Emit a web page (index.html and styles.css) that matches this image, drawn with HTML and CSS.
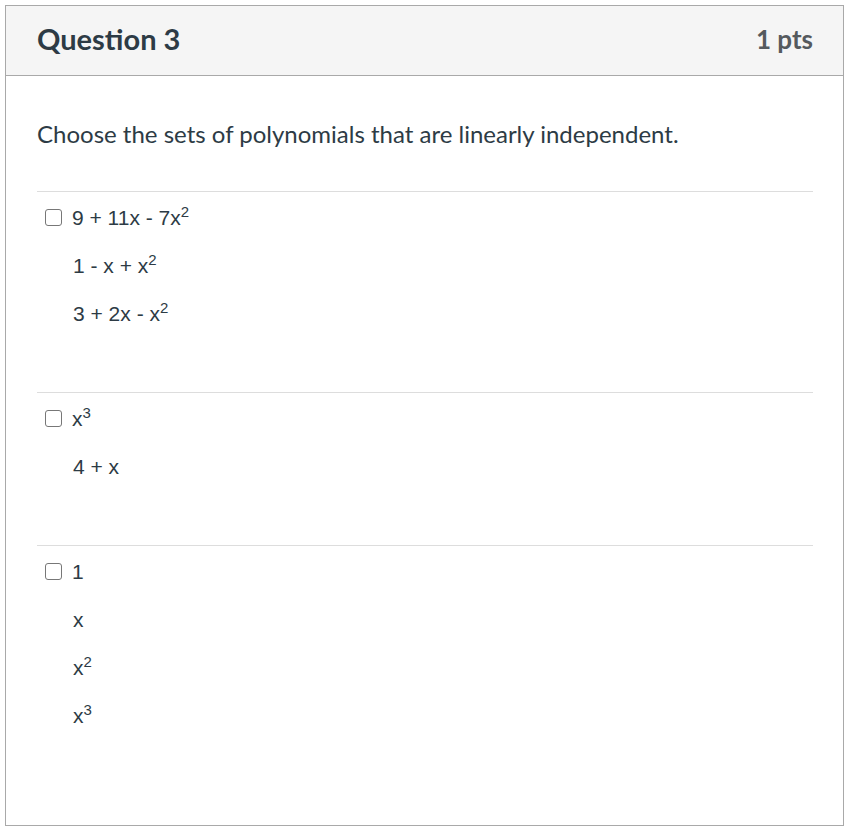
FILE: index.html
```html
<!DOCTYPE html>
<html>
<head>
<meta charset="utf-8">
<link rel="stylesheet" href="styles.css">
</head>
<body>
<div class="question">
  <div class="header">
    <h2 class="title">Question 3</h2>
    <div class="points">1 pts</div>
  </div>
  <div class="content">
    <p class="question-text">Choose the sets of polynomials that are linearly independent.</p>
    <div class="answer">
      <p class="line"><span class="box"></span>9 + 11x - 7x<sup>2</sup></p>
      <p class="line indent">1 - x + x<sup>2</sup></p>
      <p class="line indent">3 + 2x - x<sup>2</sup></p>
    </div>
    <div class="answer">
      <p class="line"><span class="box"></span>x<sup>3</sup></p>
      <p class="line indent">4 + x</p>
    </div>
    <div class="answer">
      <p class="line"><span class="box"></span>1</p>
      <p class="line indent">x</p>
      <p class="line indent">x<sup>2</sup></p>
      <p class="line indent">x<sup>3</sup></p>
    </div>
  </div>
</div>
</body>
</html>
```
FILE: styles.css
```css
html, body {
  margin: 0;
  padding: 0;
  background: #ffffff;
}
body {
  padding: 5px;
  font-family: Lato, "Liberation Sans", sans-serif;
  color: #2d3b45;
}
.question {
  width: 839px;
  box-sizing: border-box;
  border: 1px solid #a9a9a9;
}
.header {
  height: 69px;
  box-sizing: content-box;
  background: #f5f5f5;
  border-bottom: 1px solid #a9a9a9;
  display: flex;
  align-items: center;
  justify-content: space-between;
  padding: 0 30px 0 31px;
}
.title {
  margin: -4px 0 0;
  font-size: 29px;
  font-weight: 700;
  color: #2d3b45;
}
.points {
  margin-top: -4px;
  font-size: 26px;
  font-weight: 700;
  color: #555a5e;
}
.content {
  padding: 40px 30px 31px 31px;
}
.question-text {
  margin: 0 0 39px;
  font-size: 24px;
  line-height: 36px;
}
.answer {
  border-top: 1px solid #dddddd;
  padding: 12px 0 44px;
}
.line {
  margin: 0 0 20px;
  font-family: "Liberation Sans", Arial, sans-serif;
  font-size: 21px;
  line-height: 28px;
  padding-left: 8px;
}
.line.indent {
  padding-left: 36px;
}
.box {
  display: inline-block;
  width: 15px;
  height: 15px;
  border: 1.5px solid #777777;
  border-radius: 3px;
  margin-right: 10px;
  vertical-align: -1px;
}
sup {
  font-size: 15px;
  line-height: 0;
  vertical-align: 8px;
}
```
